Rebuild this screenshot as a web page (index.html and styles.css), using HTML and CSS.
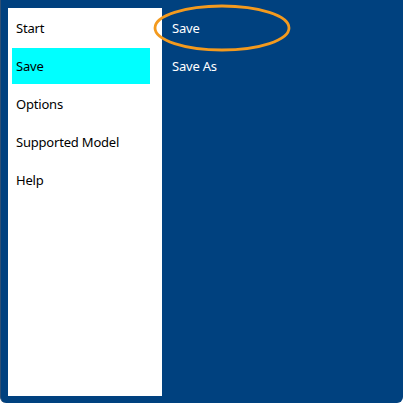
FILE: index.html
```html
<!DOCTYPE html>
<html lang="en">
<head>
    <meta charset="UTF-8">
    <title>Backstage Menu</title>
    <link rel="stylesheet" href="styles.css">
</head>
<body>
    <div class="backstage">
        <ul class="nav">
            <li>Start</li>
            <li class="selected">Save</li>
            <li>Options</li>
            <li>Supported Model</li>
            <li>Help</li>
        </ul>
        <ul class="commands">
            <li>Save</li>
            <li>Save As</li>
        </ul>
        <!-- annotation ring over the first command -->
        <svg class="callout" width="140" height="50" viewBox="0 0 140 50">
            <ellipse cx="69" cy="24" rx="67" ry="22" fill="none" stroke="#f39a1e" stroke-width="2.8"/>
        </svg>
    </div>
</body>
</html>
```

FILE: styles.css
```css
html, body {
    margin: 0;
    padding: 0;
    background: #ffffff;
}
body {
    font-family: 'Noto Sans', 'Open Sans', sans-serif;
    font-size: 13px;
    letter-spacing: -0.2px;
}
.backstage {
    position: relative;
    display: flex;
    width: 403px;
    height: 403px;
    box-sizing: border-box;
    padding: 8px 0 7px 8px;
    background: #00417f;
    border-radius: 0 0 6px 6px;
    border-left: 1px solid #2f4f73;
}
ul {
    list-style: none;
    margin: 0;
    padding: 0;
}
.nav {
    width: 154px;
    margin-left: -1px;
    padding: 2px 12px 0 4px;
    box-sizing: border-box;
    background: #ffffff;
    color: #000;
}
.nav li,
.commands li {
    height: 36px;
    line-height: 36px;
    margin-bottom: 2px;
    padding-left: 4px;
}
.nav li.selected {
    background: #00ffff;
}
.commands {
    flex: 1;
    padding: 2px 0 0 6px;
    color: #ffffff;
}
.callout {
    position: absolute;
    left: 152px;
    top: 4px;
}
```
